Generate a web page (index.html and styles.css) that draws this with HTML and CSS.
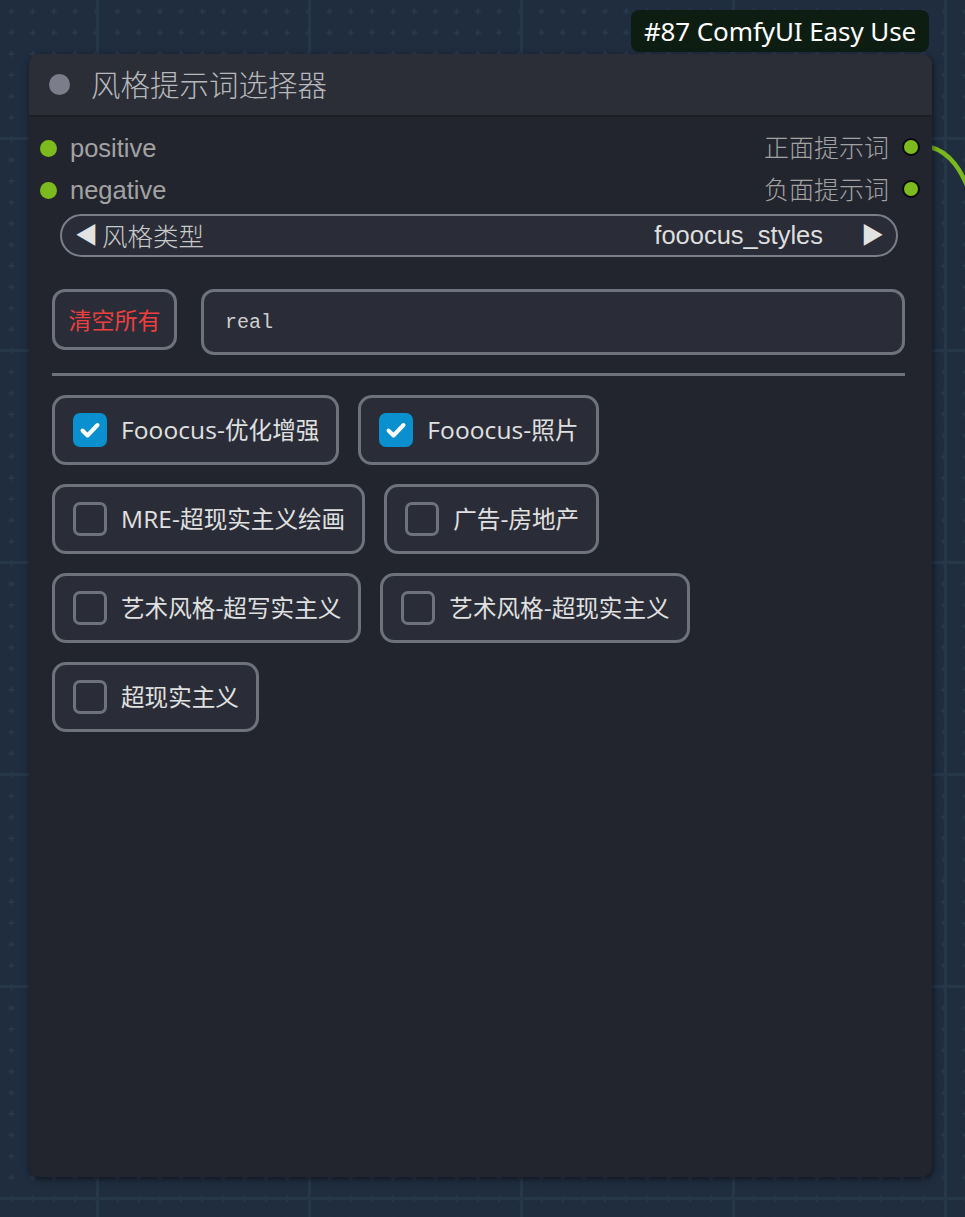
FILE: index.html
```html
<!DOCTYPE html>
<html lang="zh">
<head>
<meta charset="utf-8">
<title>风格提示词选择器</title>
<link rel="stylesheet" href="styles.css">
</head>
<body>
<div class="canvas">
  <svg class="grid" width="965" height="1217" viewBox="0 0 965 1217">
    <defs>
      <pattern id="dots" x="11.5" y="11.5" width="21.2" height="21.2" patternUnits="userSpaceOnUse">
        <rect x="-3" y="-0.75" width="6" height="1.5" fill="#2a3a4d"/>
        <rect x="-0.75" y="-3" width="1.5" height="6" fill="#2a3a4d"/>
        <rect x="18.2" y="-0.75" width="6" height="1.5" fill="#2a3a4d"/>
        <rect x="-3" y="20.45" width="6" height="1.5" fill="#2a3a4d"/>
        <rect x="18.2" y="20.45" width="6" height="1.5" fill="#2a3a4d"/>
        <rect x="20.45" y="-3" width="1.5" height="6" fill="#2a3a4d"/>
        <rect x="-0.75" y="18.2" width="1.5" height="6" fill="#2a3a4d"/>
        <rect x="20.45" y="18.2" width="1.5" height="6" fill="#2a3a4d"/>
      </pattern>
      <pattern id="lines" x="96" y="137" width="212" height="212" patternUnits="userSpaceOnUse">
        <rect x="0" y="0" width="3" height="212" fill="#26374a"/>
        <rect x="0" y="0" width="212" height="3" fill="#26374a"/>
      </pattern>
    </defs>
    <rect width="965" height="1217" fill="url(#dots)"/>
    <rect width="965" height="1217" fill="url(#lines)"/>
    <path d="M930 147 C 950 152, 962 170, 972 198" stroke="#7ab91c" stroke-width="4.5" fill="none" stroke-linecap="round"/>
  </svg>

  <div class="badge">#87 ComfyUI Easy Use</div>

  <div class="node">
    <div class="node-title">
      <span class="title-dot"></span>
      <span class="title-text">风格提示词选择器</span>
    </div>
    <div class="node-body">
      <div class="slots">
        <div class="slot-row">
          <div class="slot in"><span class="dot"></span><span class="slot-label">positive</span></div>
          <div class="slot out"><span class="slot-label">正面提示词</span><span class="dot ring"></span></div>
        </div>
        <div class="slot-row">
          <div class="slot in"><span class="dot"></span><span class="slot-label">negative</span></div>
          <div class="slot out"><span class="slot-label">负面提示词</span><span class="dot ring"></span></div>
        </div>
      </div>

      <div class="combo">
        <span class="arrow">◀</span>
        <span class="combo-name">风格类型</span>
        <span class="combo-value">fooocus_styles</span>
        <span class="arrow">▶</span>
      </div>

      <div class="dom-widget">
        <div class="toolbar">
          <button class="clear-btn">清空所有</button>
          <div class="search">real</div>
        </div>
        <div class="divider"></div>
        <div class="styles">
          <label class="item"><span class="box checked"><svg viewBox="0 0 34 34" width="34" height="34"><path d="M9.5 17.5 L14.5 22.5 L24.5 12" stroke="#fff" stroke-width="4" fill="none" stroke-linecap="round" stroke-linejoin="round"/></svg></span><span class="label"><span class="lat">Fooocus-</span>优化增强</span></label>
          <label class="item"><span class="box checked"><svg viewBox="0 0 34 34" width="34" height="34"><path d="M9.5 17.5 L14.5 22.5 L24.5 12" stroke="#fff" stroke-width="4" fill="none" stroke-linecap="round" stroke-linejoin="round"/></svg></span><span class="label"><span class="lat">Fooocus-</span>照片</span></label>
          <label class="item"><span class="box"></span><span class="label"><span class="lat">MRE-</span>超现实主义绘画</span></label>
          <label class="item"><span class="box"></span><span class="label">广告<span class="lat">-</span>房地产</span></label>
          <label class="item"><span class="box"></span><span class="label">艺术风格<span class="lat">-</span>超写实主义</span></label>
          <label class="item"><span class="box"></span><span class="label">艺术风格<span class="lat">-</span>超现实主义</span></label>
          <label class="item"><span class="box"></span><span class="label">超现实主义</span></label>
        </div>
      </div>
    </div>
  </div>
</div>
</body>
</html>
```

FILE: styles.css
```css
* { box-sizing: border-box; }

html, body {
  margin: 0;
  padding: 0;
}

body {
  width: 965px;
  height: 1217px;
  overflow: hidden;
  background: #1f2d3e;
  font-family: "Liberation Sans", "Noto Sans CJK SC", sans-serif;
}

.canvas {
  position: relative;
  width: 965px;
  height: 1217px;
}

.grid {
  position: absolute;
  left: 0;
  top: 0;
  display: block;
}

.badge {
  position: absolute;
  left: 631px;
  top: 10px;
  width: 298px;
  height: 42px;
  background: #0e1d12;
  border-radius: 8px;
  color: #ffffff;
  font-family: "Noto Sans", "Open Sans", sans-serif;
  font-size: 26px;
  line-height: 42px;
  text-align: center;
  white-space: nowrap;
  letter-spacing: -0.1px;
}

.node {
  position: absolute;
  left: 29px;
  top: 54px;
  width: 903px;
  height: 1123px;
  background: #23252e;
  border-radius: 10px;
  box-shadow: 1px 2px 6px rgba(0, 0, 0, 0.55);
  display: flex;
  flex-direction: column;
}

.node-title {
  height: 63px;
  flex: none;
  background: #2b2e37;
  border-radius: 10px 10px 0 0;
  border-bottom: 2px solid #1d1f26;
  display: flex;
  align-items: center;
  padding-left: 20px;
}

.title-dot {
  width: 21px;
  height: 21px;
  border-radius: 50%;
  background: #7b7e8a;
  flex: none;
}

.title-text {
  margin-left: 21px;
  color: #b7b8bb;
  font-family: "Noto Sans CJK SC", sans-serif;
  font-size: 29.5px;
  font-weight: 300;
  line-height: 1;
  padding-bottom: 2px;
}

.node-body {
  padding-top: 10px;
  display: flex;
  flex-direction: column;
}

.slot-row {
  height: 42px;
  display: flex;
  justify-content: space-between;
  align-items: center;
}

.slot {
  display: flex;
  align-items: center;
}

.slot.in {
  padding-left: 11px;
}

.slot.out {
  padding-right: 12px;
}

.slot-label {
  color: #a2a2a2;
  font-size: 25.5px;
  line-height: 1;
}

.slot.in .slot-label { margin-left: 13px; margin-top: 1px; }
.slot.out .slot-label {
  margin-right: 13px;
  margin-top: -3px;
  font-family: "Noto Sans CJK SC", sans-serif;
  font-weight: 300;
  font-size: 25px;
}

.dot {
  width: 17px;
  height: 17px;
  border-radius: 50%;
  background: #7cba1e;
  flex: none;
}

.dot.ring {
  width: 18px;
  height: 18px;
  border: 2px solid #0a0a0a;
  margin-top: -2px;
}

.combo {
  margin: 3px 34px 0 31px;
  height: 43px;
  border: 2px solid #7a7e89;
  border-radius: 22px;
  background: #2a2d37;
  display: flex;
  align-items: center;
  padding: 0 12px 0 13px;
  color: #dedede;
  font-size: 25.5px;
}

.combo .arrow {
  font-size: 23px;
  line-height: 1;
  color: #e2e2e2;
}

.combo-name {
  margin-left: 4px;
  font-family: "Noto Sans CJK SC", sans-serif;
  font-weight: 300;
  color: #c9c9c9;
  line-height: 1;
  margin-top: -2px;
}

.combo-value {
  margin-left: auto;
  margin-right: 38px;
  font-size: 25.5px;
  line-height: 1;
}

.dom-widget {
  margin: 32px 27px 0 23px;
  display: flex;
  flex-direction: column;
}

.toolbar {
  display: flex;
  align-items: flex-start;
  gap: 24px;
}

.clear-btn {
  width: 125px;
  height: 61px;
  border: 3px solid #6e727d;
  border-radius: 13px;
  background: #2a2d37;
  color: #ec4040;
  font-family: "Noto Sans CJK SC", sans-serif;
  font-size: 23px;
  padding: 0;
  line-height: 1;
}

.search {
  flex: 1;
  height: 66px;
  border: 3px solid #6e727d;
  border-radius: 13px;
  background: #2a2d37;
  color: #cfcfcf;
  font-family: "Liberation Mono", monospace;
  font-size: 20px;
  display: flex;
  align-items: center;
  padding-left: 21px;
}

.divider {
  margin-top: 18px;
  height: 3px;
  background: #6e727d;
}

.styles {
  margin-top: 19px;
  display: flex;
  flex-wrap: wrap;
  gap: 19px 19px;
}

.item {
  height: 70px;
  border: 3px solid #6e727d;
  border-radius: 14px;
  background: #2a2d37;
  display: flex;
  align-items: center;
  padding: 0 17px 0 18px;
}

.box {
  width: 34px;
  height: 34px;
  border: 3px solid #6e727d;
  border-radius: 7px;
  flex: none;
  display: flex;
  align-items: center;
  justify-content: center;
}

.box.checked {
  border: none;
  background: #0a90cf;
}

.label {
  margin-left: 14px;
  color: #e0e0e0;
  font-family: "Noto Sans CJK SC", sans-serif;
  font-size: 23.6px;
  line-height: 1;
  white-space: nowrap;
}

.lat {
  font-family: "Open Sans", "Noto Sans", sans-serif;
  font-size: 24.5px;
  letter-spacing: 0.1px;
}
```
